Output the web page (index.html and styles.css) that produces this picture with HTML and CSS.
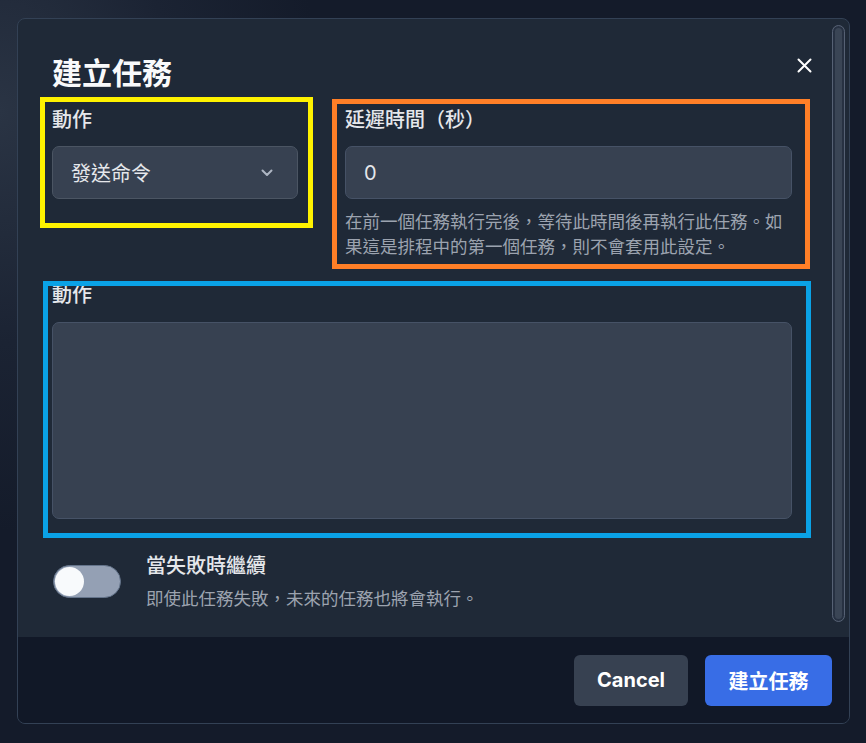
FILE: index.html
```html
<!DOCTYPE html>
<html>
<head>
  <meta charset="utf-8">
  <title>建立任務</title>
  <link rel="stylesheet" href="styles.css">
</head>
<body>
  <div class="modal">
    <div class="modal-body">
      <div class="modal-content">
        <div class="modal-header">
          <h2 class="modal-title">建立任務</h2>
          <button class="close-btn" aria-label="關閉">
            <svg width="15" height="15" viewBox="0 0 15 15"><path d="M1.5 1.5 L13.5 13.5 M13.5 1.5 L1.5 13.5" stroke="#ffffff" stroke-width="2" stroke-linecap="round"/></svg>
          </button>
        </div>

        <div class="form-grid">
          <div class="field mark-yellow">
            <label class="field-label">動作</label>
            <div class="select">
              <span>發送命令</span>
              <svg width="12" height="8" viewBox="0 0 12 8"><path d="M1.5 1.5 L6 6 L10.5 1.5" fill="none" stroke="#aeb6c3" stroke-width="2" stroke-linecap="round" stroke-linejoin="round"/></svg>
            </div>
          </div>
          <div class="field mark-orange">
            <label class="field-label">延遲時間（秒）</label>
            <div class="input">0</div>
            <p class="help">在前一個任務執行完後，等待此時間後再執行此任務。如果這是排程中的第一個任務，則不會套用此設定。</p>
          </div>
        </div>

        <div class="field field-wide mark-blue">
          <label class="field-label">動作</label>
          <div class="textarea"></div>
        </div>

        <div class="toggle-row">
          <div class="toggle"><span class="knob"></span></div>
          <div class="toggle-text">
            <div class="toggle-label">當失敗時繼續</div>
            <div class="toggle-desc">即使此任務失敗，未來的任務也將會執行。</div>
          </div>
        </div>
      </div>
      <div class="scrollbar"></div>
    </div>
    <div class="modal-footer">
      <button class="btn btn-cancel">Cancel</button>
      <button class="btn btn-primary">建立任務</button>
    </div>
  </div>
</body>
</html>
```

FILE: styles.css
```css
html, body {
  margin: 0;
  height: 743px;
  overflow: hidden;
}
body {
  font-family: Inter, "Noto Sans CJK TC", sans-serif;
  background: radial-gradient(ellipse 320px 420px at 0 15%, #2a3444 0, #1b2333 55%, transparent 100%), #141b2a;
  color: #e5e7eb;
}
.modal {
  box-sizing: border-box;
  width: 833px;
  height: 706px;
  margin: 18px 0 0 17px;
  border: 1px solid #334155;
  border-radius: 8px;
  background: #1f2937;
  overflow: hidden;
  display: flex;
  flex-direction: column;
}
.modal-body {
  height: 618px;
  display: flex;
}
.modal-content {
  flex: 1;
  padding: 36px 40px 0 34px;
}
.scrollbar {
  box-sizing: border-box;
  width: 13px;
  margin: 6px 4px 15px 0;
  border: 1px solid #566174;
  border-radius: 7px;
  background: #3a4555;
  box-shadow: inset 0 0 0 2px #273142;
}
.modal-header {
  display: flex;
  justify-content: space-between;
  align-items: flex-start;
  margin-right: -20px;
}
.modal-title {
  margin: 0;
  font-size: 30px;
  line-height: 36px;
  font-weight: 700;
  color: #f9fafb;
}
.close-btn {
  margin-top: 3px;
  padding: 0;
  border: 0;
  background: none;
  display: flex;
}
.form-grid {
  display: grid;
  grid-template-columns: 246px 1fr;
  column-gap: 47px;
  margin-top: 15px;
  align-items: start;
}
.field {
  position: relative;
  display: flex;
  flex-direction: column;
}
.field-label {
  font-size: 20px;
  line-height: 28px;
  font-weight: 500;
  color: #e5e7eb;
  margin-bottom: 12px;
}
.select, .input, .textarea {
  box-sizing: border-box;
  background: #374151;
  border: 1px solid #4b5563;
  border-radius: 7px;
}
.select, .input {
  height: 53px;
  display: flex;
  align-items: center;
  font-size: 20px;
  color: #e5e7eb;
}
.select {
  justify-content: space-between;
  padding: 0 24px 0 18px;
}
.input {
  padding: 0 18px;
  border-color: #465266;
}
.help {
  margin: 10px 0 0;
  font-size: 17.5px;
  line-height: 25px;
  color: #9ca3af;
}
.field-wide {
  margin-top: 22px;
}
.field-wide .field-label {
  margin-bottom: 13px;
}
.textarea {
  height: 197px;
  border-color: #465266;
}
.toggle-row {
  display: flex;
  align-items: center;
  gap: 25px;
  margin-top: 33px;
  padding-left: 1px;
}
.toggle {
  box-sizing: border-box;
  width: 68px;
  height: 33px;
  border-radius: 17px;
  background: #94a0b4;
  border: 1px solid #64748b;
  padding: 1px;
  display: flex;
}
.knob {
  width: 29px;
  height: 29px;
  border-radius: 50%;
  background: #f8fafc;
}
.toggle-label {
  font-size: 20px;
  line-height: 28px;
  font-weight: 500;
  color: #e5e7eb;
}
.toggle-desc {
  margin-top: 6px;
  font-size: 17.5px;
  line-height: 25px;
  color: #9ca3af;
}
.modal-footer {
  height: 86px;
  background: #111827;
  display: flex;
  justify-content: flex-end;
  align-items: center;
  gap: 17px;
  padding: 0 16px 0 16px;
}
.btn {
  height: 51px;
  padding: 0 23px;
  border: 0;
  border-radius: 6px;
  font-family: Inter, "Noto Sans CJK TC", sans-serif;
  font-size: 20px;
  font-weight: 700;
  color: #ffffff;
}
.btn-cancel {
  background: #374151;
}
.btn-primary {
  width: 127px;
  margin-right: 1px;
  background: #386de6;
}

/* annotation frames */
.mark-yellow::after,
.mark-orange::after,
.mark-blue::after {
  content: "";
  position: absolute;
  border: 5px solid;
  pointer-events: none;
}
.mark-yellow::after {
  inset: -9px -15px -29px -12px;
  border-color: #fff200;
}
.mark-orange::after {
  inset: -7px -18px -10px -13px;
  border-color: #ff7f27;
}
.mark-blue::after {
  inset: 0 -19px -19px -9px;
  border-color: #0aa2e6;
}
```
